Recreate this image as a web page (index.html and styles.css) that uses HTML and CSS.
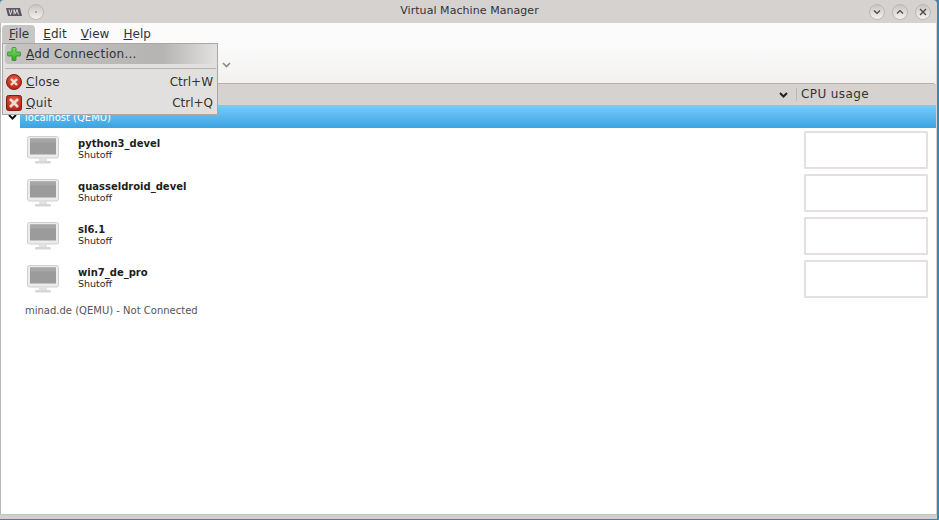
FILE: index.html
```html
<!DOCTYPE html>
<html lang="en">
<head>
<meta charset="utf-8">
<title>Virtual Machine Manager</title>
<link rel="stylesheet" href="styles.css">
</head>
<body>
<svg width="0" height="0" class="defs">
  <symbol id="vm" viewBox="0 0 32 28">
    <rect x="0.5" y="0.5" width="31" height="21.500" rx="2" fill="#ececec" stroke="#cfcfcf"/>
    <rect x="3" y="2.500" width="26" height="16" fill="#9b9b9b"/>
    <rect x="3" y="2.500" width="26" height="4" fill="#a6a6a6"/>
    <rect x="12" y="22" width="8" height="3" fill="#e2e2e2"/>
    <rect x="8" y="25" width="16" height="2.500" rx="1.200" fill="#d6d6d6"/>
  </symbol>
  <radialGradient id="redglow" cx="50%" cy="35%" r="65%">
    <stop offset="0" stop-color="#e8604a"/>
    <stop offset="1" stop-color="#b3201a"/>
  </radialGradient>
  <linearGradient id="greenfill" x1="0" y1="0" x2="0" y2="1">
    <stop offset="0" stop-color="#7fe05f"/>
    <stop offset="1" stop-color="#33a52c"/>
  </linearGradient>
</svg>
<div class="window">
  <header class="titlebar">
    <div class="tb-left">
      <svg class="app-icon" width="16" height="10" viewBox="0 0 16 10"><path d="M0 1h14l2 8H2z" fill="#5a5560"/><path d="M3 2.500l1.500 5L6 2.500M8 7.500V2.500l1.500 4 1.500-4 1.500 5" fill="none" stroke="#ddd" stroke-width="1"/></svg>
      <span class="wm-btn"><span class="wm-dot"></span></span>
    </div>
    <div class="title">Virtual Machine Manager</div>
    <div class="tb-right">
      <span class="wm-btn"><svg width="8" height="6" viewBox="0 0 8 6"><path d="M1 1.500l3 3 3-3" fill="none" stroke="#444" stroke-width="1.200"/></svg></span>
      <span class="wm-btn"><svg width="8" height="6" viewBox="0 0 8 6"><path d="M1 4.500l3-3 3 3" fill="none" stroke="#444" stroke-width="1.200"/></svg></span>
      <span class="wm-btn"><svg width="8" height="8" viewBox="0 0 8 8"><path d="M1 1l6 6M7 1l-6 6" fill="none" stroke="#444" stroke-width="1.300"/></svg></span>
    </div>
  </header>
  <main class="client">
    <nav class="menubar">
      <span class="menu-item active"><u>F</u>ile</span>
      <span class="menu-item"><u>E</u>dit</span>
      <span class="menu-item"><u>V</u>iew</span>
      <span class="menu-item"><u>H</u>elp</span>
    </nav>
    <div class="toolbar">
      <svg class="tool-arrow" width="9" height="6" viewBox="0 0 9 6"><path d="M1 1l3.500 3.500L8 1" fill="none" stroke="#8a8a8a" stroke-width="1.600"/></svg>
    </div>
    <section class="panel">
      <div class="col-head">
        <svg class="sort" width="9" height="6" viewBox="0 0 9 6"><path d="M1 1l3.500 3.500L8 1" fill="none" stroke="#222" stroke-width="2"/></svg>
        <span class="col-sep"></span>
        <span class="col-label">CPU usage</span>
      </div>
      <div class="tree">
        <div class="conn-row">
          <svg class="expander" width="9" height="6" viewBox="0 0 9 6"><path d="M1 1l3.500 3.500L8 1" fill="none" stroke="#111" stroke-width="2"/></svg>
          <div class="conn-sel">localhost (QEMU)</div>
        </div>
        <div class="vm-row">
          <svg class="vm-icon"><use href="#vm"/></svg>
          <div class="vm-text"><div class="vm-name">python3_devel</div><div class="vm-state">Shutoff</div></div>
          <div class="graph"></div>
        </div>
        <div class="vm-row">
          <svg class="vm-icon"><use href="#vm"/></svg>
          <div class="vm-text"><div class="vm-name">quasseldroid_devel</div><div class="vm-state">Shutoff</div></div>
          <div class="graph"></div>
        </div>
        <div class="vm-row">
          <svg class="vm-icon"><use href="#vm"/></svg>
          <div class="vm-text"><div class="vm-name">sl6.1</div><div class="vm-state">Shutoff</div></div>
          <div class="graph"></div>
        </div>
        <div class="vm-row">
          <svg class="vm-icon"><use href="#vm"/></svg>
          <div class="vm-text"><div class="vm-name">win7_de_pro</div><div class="vm-state">Shutoff</div></div>
          <div class="graph"></div>
        </div>
        <div class="conn-off">minad.de (QEMU) - Not Connected</div>
      </div>
    </section>
  </main>
  <div class="bottom-edge"></div>
</div>
<div class="menu">
  <div class="mi hover">
    <svg class="mi-icon" width="16" height="16" viewBox="0 0 16 16"><path d="M6.500 1.500h3a.5.5 0 0 1 .5.5v4h4a.5.5 0 0 1 .5.5v3a.5.5 0 0 1-.5.5h-4v4a.5.5 0 0 1-.5.5h-3a.5.5 0 0 1-.5-.5v-4H2a.5.5 0 0 1-.5-.5v-3a.5.5 0 0 1 .5-.5h4V2a.5.5 0 0 1 .5-.5z" fill="url(#greenfill)" stroke="#2f8f28" stroke-width="0.800"/></svg>
    <span class="mi-label"><u>A</u>dd Connection...</span>
  </div>
  <div class="mi-sep"></div>
  <div class="mi">
    <svg class="mi-icon" width="16" height="16" viewBox="0 0 16 16"><circle cx="8" cy="8" r="7.500" fill="url(#redglow)" stroke="#8c1a14"/><path d="M5 5l6 6M11 5l-6 6" stroke="#f3e0cc" stroke-width="2.400"/></svg>
    <span class="mi-label"><u>C</u>lose</span><span class="mi-key">Ctrl+W</span>
  </div>
  <div class="mi">
    <svg class="mi-icon" width="16" height="16" viewBox="0 0 16 16"><rect x="0.500" y="0.500" width="15" height="15" rx="2" fill="url(#redglow)" stroke="#7d1f18"/><path d="M4 4l8 8M12 4l-8 8" stroke="#f2ddd2" stroke-width="2.600"/></svg>
    <span class="mi-label"><u>Q</u>uit</span><span class="mi-key">Ctrl+Q</span>
  </div>
</div>
</body>
</html>
```

FILE: styles.css
```css
html, body {
  margin: 0;
  height: 100%;
  background: #3f86ad;
  font-family: "DejaVu Sans", sans-serif;
  font-size: 12px;
  color: #2e3436;
  overflow: hidden;
}
.defs { position: absolute; }
u { text-decoration: underline; text-underline-offset: 1px; }
.window {
  width: 937px;
  height: 519px;
  display: flex;
  flex-direction: column;
  background: #d6d2d0;
  border-radius: 4px 4px 0 0;
}
.titlebar {
  height: 23px;
  flex: none;
  display: flex;
  align-items: center;
  justify-content: space-between;
  padding: 0 6px;
  position: relative;
  font-size: 11px;
  color: #333;
}
.tb-left, .tb-right { display: flex; align-items: center; }
.tb-left { gap: 6px; }
.tb-right { gap: 7px; }
.title { position: absolute; left: 2px; right: 0; top: 4px; text-align: center; letter-spacing: 0.06px; }
.wm-btn {
  width: 16px;
  height: 16px;
  box-sizing: border-box;
  border-radius: 50%;
  display: flex;
  align-items: center;
  justify-content: center;
  background: linear-gradient(#c9c5c3, #f4f3f2);
  border: 1px solid #bcb8b6;
}
.wm-dot { width: 2px; height: 2px; border-radius: 50%; background: #999; }
.client {
  flex: 1;
  display: flex;
  flex-direction: column;
  margin-right: 1px;
  border-left: 1px solid #b9b7b5;
  padding-left: 1px;
  background: #fff;
  min-height: 0;
}
.menubar {
  height: 21px;
  flex: none;
  display: flex;
  align-items: flex-end;
  background: #fbfbfb;
  padding-top: 2px;
  box-sizing: border-box;
}
.menu-item {
  height: 19px;
  line-height: 19px;
  padding: 0 7px;
  letter-spacing: 0.05px;
}
.menu-item.active {
  background: #c8c6c4;
  border-radius: 4px 4px 0 0;
  margin-right: 1px;
  padding: 0 6px 0 7px;
}
.toolbar {
  height: 39px;
  flex: none;
  background: linear-gradient(#fbfbfb, #f2f1f0);
  position: relative;
}
.tool-arrow { position: absolute; left: 220px; top: 18px; }
.panel { flex: 1; display: flex; flex-direction: column; min-height: 0; }
.col-head {
  height: 22px;
  flex: none;
  margin-left: 18px;
  background: #d6d2d0;
  border-top: 1px solid #b4b2b0;
  border-radius: 3px 3px 0 0;
  display: flex;
  align-items: center;
  justify-content: flex-end;
  box-sizing: border-box;
}
.sort { margin-right: 8px; }
.col-sep { width: 1px; height: 13px; background: #bbb8b6; margin-right: 4px; }
.col-label { width: 135px; color: #333; letter-spacing: 0.4px; padding-bottom: 2px; }
.tree { flex: 1; position: relative; }
.conn-row { display: flex; align-items: center; height: 23px; position: relative; }
.expander { position: absolute; left: 6px; top: 9px; }
.conn-sel {
  margin-left: 18px;
  flex: 1;
  height: 23px;
  box-sizing: border-box;
  padding: 7px 0 0 5px;
  font-size: 10px;
  color: #fff;
  background: linear-gradient(#7bcbf9, #3aa4e2);
  line-height: 12px;
}
.vm-row {
  height: 43px;
  display: flex;
  align-items: center;
  padding-left: 25px;
  padding-right: 8px;
}
.vm-icon { width: 32px; height: 28px; flex: none; }
.vm-text { margin-left: 19px; flex: 1; line-height: 11px; position: relative; top: -1px; }
.vm-name { font-size: 10px; font-weight: bold; color: #1e1e1e; }
.vm-state { font-size: 9.500px; color: #2a2a2a; }
.graph {
  width: 120px;
  height: 34px;
  flex: none;
  border: 2px solid #e4e0e0;
  border-radius: 1px;
  background: #fff;
}
.conn-off {
  margin-left: 23px;
  font-size: 10px;
  color: #555;
  line-height: 12px;
  padding-top: 5px;
}
.bottom-edge { height: 5px; flex: none; background: #d2cfcc; border-top: 1px solid #c4c1be; box-sizing: border-box; }
.menu {
  position: absolute;
  left: 2px;
  top: 43px;
  width: 216px;
  height: 72px;
  box-sizing: border-box;
  background: #e2e0de;
  border: 1px solid #a9a7a5;
  padding: 0 0 0 2px;
  color: #2e3436;
}
.mi { height: 21px; display: flex; align-items: center; padding-right: 4px; }
.mi.hover {
  height: 20px;
  border-radius: 3px;
  background: linear-gradient(90deg, #c6c4c2 0, #b6b4b2 75%, #e2e0de 100%);
  margin-right: 2px;
}
.mi-icon { flex: none; margin: 0 4px 0 1px; }
.mi-label { flex: 1; letter-spacing: 0.25px; }
.mi-key { color: #333; }
.mi-sep { height: 1px; background: #b6b4b2; margin: 4px 1px 2px 0; }
```
